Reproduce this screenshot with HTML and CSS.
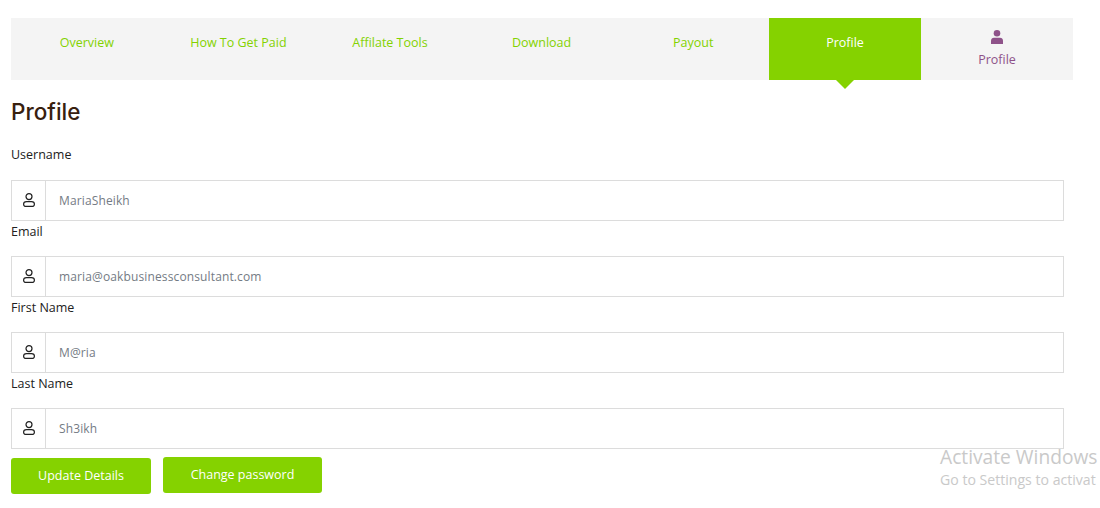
FILE: index.html
```html
<!DOCTYPE html>
<html lang="en">
<head>
    <meta charset="UTF-8">
    <meta name="viewport" content="width=device-width, initial-scale=1.0">
    <title>Profile</title>
    <link rel="stylesheet" href="styles.css">
</head>
<body>

    <nav class="tabs">
        <a href="#">Overview</a>
        <a href="#">How To Get Paid</a>
        <a href="#">Affilate Tools</a>
        <a href="#">Download</a>
        <a href="#">Payout</a>
        <a href="#" class="active">Profile</a>
        <a href="#" class="account">
            <svg viewBox="0 0 12 14" width="12" height="14"><circle cx="6" cy="3.300" r="3.300"/><path d="M0 14V10.700C0 9 1.300 7.800 2.900 7.800H9.100C10.700 7.800 12 9 12 10.700V14Z"/></svg>
            <span>Profile</span>
        </a>
    </nav>

    <main class="content">
        <h1>Profile</h1>

        <form class="profile-form">
            <label class="first">Username</label>
            <div class="field">
                <span class="field-icon">
                    <svg viewBox="0 0 12 14" width="12" height="14"><circle cx="6" cy="3.600" r="3"/><path d="M3.500 8.600H8.500C10.200 8.600 11.400 9.700 11.400 11.100C11.400 12.500 10.900 13.300 9.800 13.300H2.200C1.100 13.300 .6 12.500 .6 11.100C.6 9.700 1.800 8.600 3.500 8.600Z"/></svg>
                </span>
                <input type="text" value="MariaSheikh">
            </div>

            <label>Email</label>
            <div class="field">
                <span class="field-icon">
                    <svg viewBox="0 0 12 14" width="12" height="14"><circle cx="6" cy="3.600" r="3"/><path d="M3.500 8.600H8.500C10.200 8.600 11.400 9.700 11.400 11.100C11.400 12.500 10.900 13.300 9.800 13.300H2.200C1.100 13.300 .6 12.500 .6 11.100C.6 9.700 1.800 8.600 3.500 8.600Z"/></svg>
                </span>
                <input type="text" value="maria@oakbusinessconsultant.com">
            </div>

            <label>First Name</label>
            <div class="field">
                <span class="field-icon">
                    <svg viewBox="0 0 12 14" width="12" height="14"><circle cx="6" cy="3.600" r="3"/><path d="M3.500 8.600H8.500C10.200 8.600 11.400 9.700 11.400 11.100C11.400 12.500 10.900 13.300 9.800 13.300H2.200C1.100 13.300 .6 12.500 .6 11.100C.6 9.700 1.800 8.600 3.500 8.600Z"/></svg>
                </span>
                <input type="text" value="M@ria">
            </div>

            <label>Last Name</label>
            <div class="field">
                <span class="field-icon">
                    <svg viewBox="0 0 12 14" width="12" height="14"><circle cx="6" cy="3.600" r="3"/><path d="M3.500 8.600H8.500C10.200 8.600 11.400 9.700 11.400 11.100C11.400 12.500 10.900 13.300 9.800 13.300H2.200C1.100 13.300 .6 12.500 .6 11.100C.6 9.700 1.800 8.600 3.500 8.600Z"/></svg>
                </span>
                <input type="text" value="Sh3ikh">
            </div>

            <div class="actions">
                <button type="button" class="update">Update Details</button>
                <button type="button" class="password">Change password</button>
            </div>
        </form>
    </main>

    <div class="watermark">
        <div class="watermark-title">Activate Windows</div>
        <div class="watermark-sub">Go to Settings to activat</div>
    </div>

</body>
</html>
```

FILE: styles.css
```css
html, body {
    height: 100%;
}

body {
    font-family: 'Open Sans', 'Liberation Sans', sans-serif;
    margin: 0;
    padding: 18px 27px 0 11px;
    box-sizing: border-box;
    overflow: hidden;
    background-color: #fff;
    color: #212121;
}

.tabs {
    display: grid;
    grid-template-columns: repeat(5, 1fr) 152px 152px;
    height: 62px;
    background-color: #f4f4f4;
}

.tabs a {
    position: relative;
    display: flex;
    flex-direction: column;
    align-items: center;
    padding-top: 16px;
    font-size: 12.5px;
    line-height: 17px;
    color: #83d200;
    text-decoration: none;
}

.tabs a.active {
    background-color: #85d200;
    color: #fff;
}

.tabs a.active::after {
    content: "";
    position: absolute;
    left: 50%;
    bottom: -9px;
    margin-left: -9px;
    border-top: 9px solid #85d200;
    border-left: 9px solid transparent;
    border-right: 9px solid transparent;
}

.tabs a.account {
    padding-top: 12px;
    color: #8e5289;
}

.account svg {
    fill: #8e5289;
    margin-bottom: 7px;
}

h1 {
    font-family: Inter, 'Open Sans', sans-serif;
    font-size: 22.5px;
    line-height: 30px;
    font-weight: 500;
    color: #38200f;
    margin: 17px 0 0;
}

.profile-form label {
    display: block;
    box-sizing: border-box;
    font-size: 12.5px;
    line-height: 17px;
    height: 35px;
    padding-top: 2px;
    color: #212121;
}

.profile-form label.first {
    margin-top: 19px;
    height: 34px;
    padding-top: 0;
}

.field {
    display: flex;
    width: 1053px;
    height: 41px;
    box-sizing: border-box;
    border: 1px solid #dcdcdc;
    background-color: #fff;
}

.field-icon {
    display: flex;
    flex: none;
    align-items: center;
    justify-content: center;
    width: 33px;
    border-right: 1px solid #dcdcdc;
}

.field-icon svg {
    fill: none;
    stroke: #222;
    stroke-width: 1.2;
    margin-top: -2px;
}

.field input {
    flex: 1;
    min-width: 0;
    border: none;
    outline: none;
    padding: 0 13px;
    font-family: inherit;
    font-size: 12px;
    letter-spacing: 0.13px;
    color: #747b84;
    background: transparent;
}

.actions {
    display: flex;
    align-items: flex-start;
    gap: 12px;
    margin-top: 8px;
}

.actions button {
    height: 36px;
    padding-bottom: 3px;
    border: none;
    border-radius: 3px;
    background-color: #85d200;
    color: #fff;
    font-family: inherit;
    font-size: 12.5px;
    cursor: pointer;
}

.update {
    width: 140px;
    margin-top: 1px;
}

.password {
    width: 159px;
}

.watermark {
    position: absolute;
    left: 940px;
    top: 444px;
    color: #c9c9c9;
    white-space: nowrap;
}

.watermark-title {
    font-size: 19.2px;
    line-height: 25px;
}

.watermark-sub {
    font-size: 14.1px;
    line-height: 20px;
    margin-top: 1px;
}
```
